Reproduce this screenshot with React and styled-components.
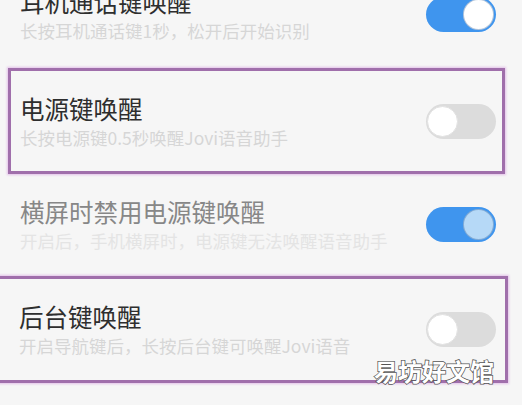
import React from 'react';
import styled, { createGlobalStyle } from 'styled-components';

const GlobalStyle = createGlobalStyle`
  html, body {
    margin: 0;
    padding: 0;
    background: #f6f6f6;
    overflow: hidden;
  }
  body {
    font-family: "Noto Sans CJK SC", "Noto Sans", sans-serif;
  }
`;

const Page = styled.div`
  position: relative;
  width: 522px;
  height: 405px;
  overflow: hidden;
  background: #f6f6f6;
`;

const List = styled.div`
  display: flex;
  flex-direction: column;
  margin-top: -38px;
`;

const Row = styled.div`
  box-sizing: border-box;
  height: ${p => p.$h || 105}px;
  display: flex;
  align-items: center;
  justify-content: space-between;
  margin: ${p => p.$mt || 0}px ${p => p.$right || 0}px 0 ${p => p.$left || 0}px;
  padding: 0 ${p => p.$padR}px 0 ${p => p.$padL}px;
  border: 3px solid ${p => (p.$boxed ? '#a06fab' : 'transparent')};
  box-shadow: ${p => (p.$boxed ? '0 0 2px 1px rgba(222, 180, 230, 0.8)' : 'none')};
`;

const TextBlock = styled.div`
  display: flex;
  flex-direction: column;
  gap: 3px;
`;

const Title = styled.div`
  font-size: 24.5px;
  line-height: 30px;
  color: ${p => (p.$dim ? '#878787' : '#2e2e2e')};
  white-space: nowrap;
`;

const Sub = styled.div`
  font-size: 17.5px;
  line-height: 22px;
  color: ${p => (p.$faint ? '#e4e4e4' : '#d6d6d6')};
  white-space: nowrap;
`;

const Track = styled.div`
  position: relative;
  flex: none;
  width: 70px;
  height: 35px;
  border-radius: 18px;
  background: ${p => (p.$on ? '#3f95ee' : '#dcdcdc')};
`;

const Knob = styled.div`
  position: absolute;
  top: 2px;
  ${p => (p.$on ? 'right: 2px;' : 'left: 1px;')}
  width: 31px;
  height: 31px;
  border-radius: 50%;
  box-sizing: border-box;
  background: ${p => (p.$dim ? '#b6d9f7' : '#ffffff')};
  border: 1px solid ${p => (p.$on ? 'rgba(40, 90, 150, 0.35)' : '#e2e2e2')};
`;

const Watermark = styled.div`
  position: absolute;
  left: 374px;
  top: 355px;
  font-size: 24px;
  line-height: 32px;
  font-weight: 700;
  color: #ffffff;
  -webkit-text-stroke: 1.5px #555555;
  paint-order: stroke fill;
`;

const Toggle = ({ on, dim }) => (
  <Track $on={on}>
    <Knob $on={on} $dim={dim} />
  </Track>
);

const rows = [
  {
    title: '耳机通话键唤醒',
    sub: '长按耳机通话键1秒，松开后开始识别',
    on: true,
    layout: { padL: 17, padR: 23 },
  },
  {
    title: '电源键唤醒',
    sub: '长按电源键0.5秒唤醒Jovi语音助手',
    on: false,
    boxed: true,
    layout: { left: 8, right: 17, padL: 9, padR: 6, h: 106, mt: 1 },
  },
  {
    title: '横屏时禁用电源键唤醒',
    sub: '开启后，手机横屏时，电源键无法唤醒语音助手',
    on: true,
    dim: true,
    layout: { padL: 17, padR: 23, mt: -2 },
  },
  {
    title: '后台键唤醒',
    sub: '开启导航键后，长按后台键可唤醒Jovi语音',
    on: false,
    boxed: true,
    layout: { left: -4, right: 14, padL: 20, padR: 9, h: 107, mt: -1 },
  },
];

export default function App() {
  return (
    <Page>
      <GlobalStyle />
      <List>
        {rows.map(r => (
          <Row
            key={r.title}
            $boxed={r.boxed}
            $left={r.layout.left}
            $right={r.layout.right}
            $padL={r.layout.padL}
            $padR={r.layout.padR}
            $h={r.layout.h}
            $mt={r.layout.mt}
          >
            <TextBlock>
              <Title $dim={r.dim}>{r.title}</Title>
              <Sub $faint={r.dim}>{r.sub}</Sub>
            </TextBlock>
            <Toggle on={r.on} dim={r.dim} />
          </Row>
        ))}
      </List>
      <Watermark>易坊好文馆</Watermark>
    </Page>
  );
}
